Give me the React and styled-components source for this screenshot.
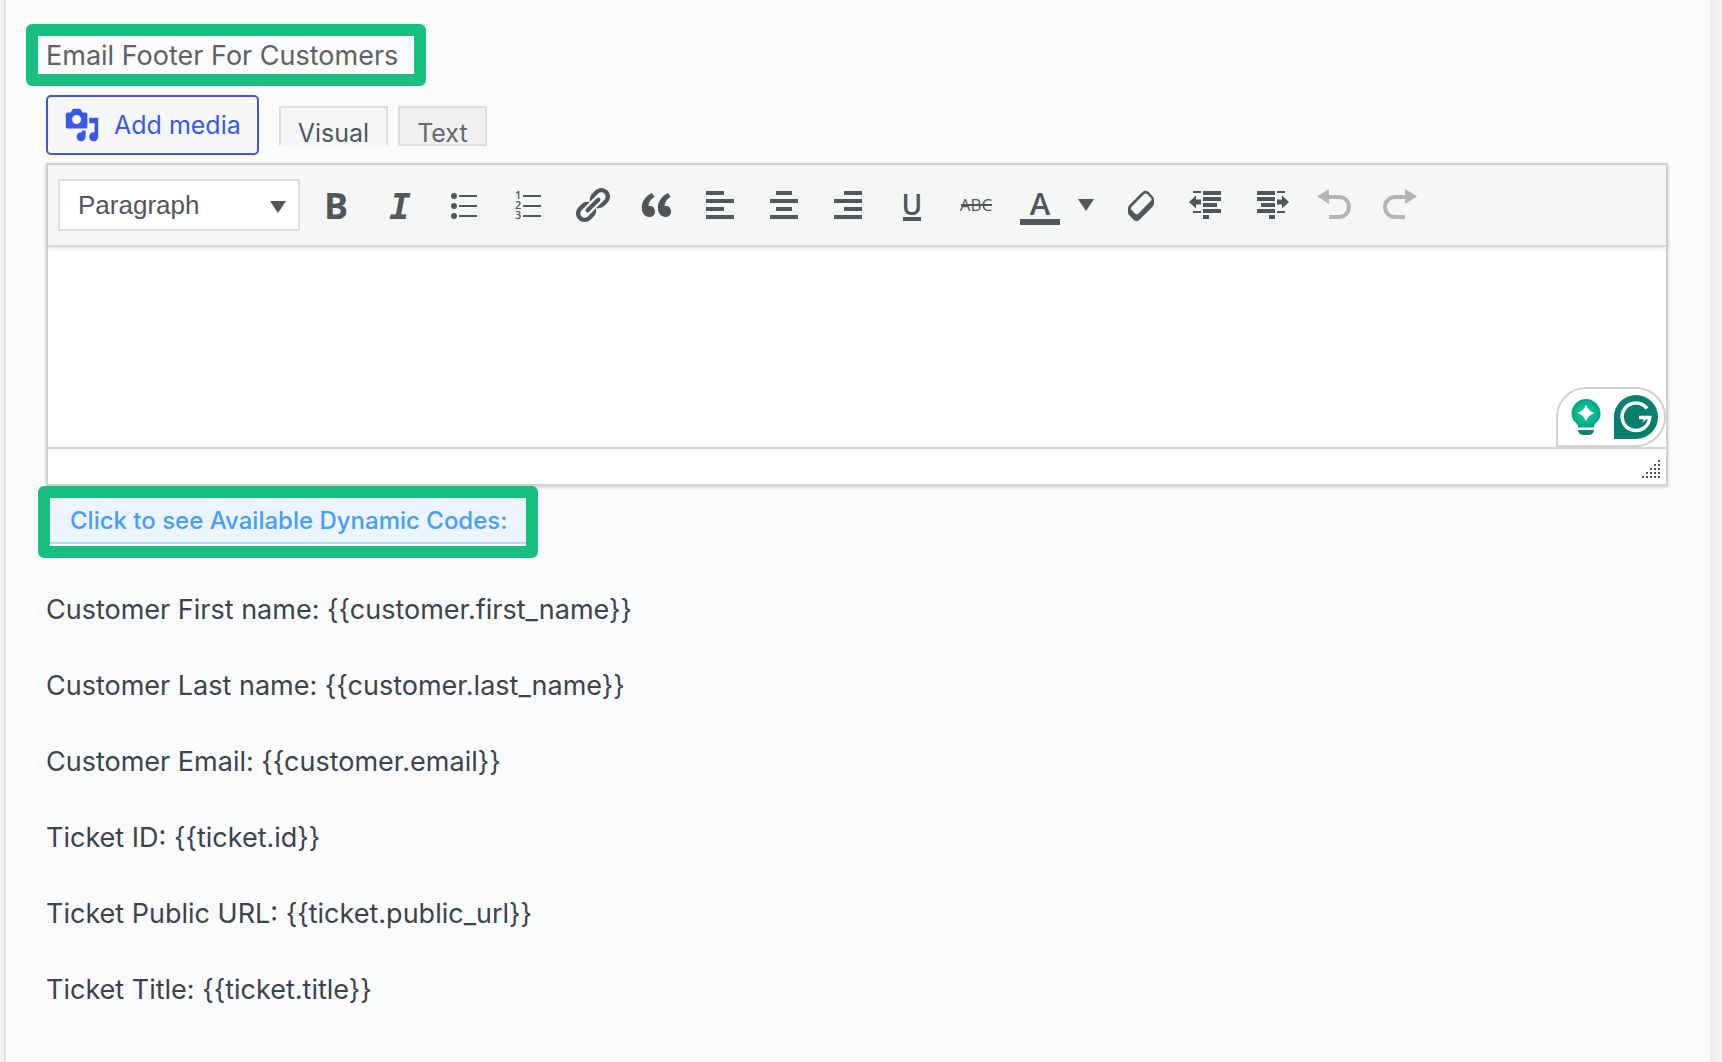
import React, { useState } from "react";
import styled, { createGlobalStyle, css } from "styled-components";

const GlobalStyle = createGlobalStyle`
  * {
    box-sizing: border-box;
  }
  body {
    margin: 0;
    background: #f0f1f3;
    font-family: Inter, "Liberation Sans", sans-serif;
    color: #3c434a;
  }
  button, select, textarea {
    font-family: inherit;
    margin: 0;
  }
`;

const Panel = styled.main`
  min-height: 100vh;
  margin: 0 6px 0 4px;
  padding: 24px 42px 40px 40px;
  background: #fafbfd;
  border-left: 2px solid #dfe0e3;
  border-right: 6px solid #ecedf0;
`;

const Highlight = styled.div`
  width: fit-content;
  border: 12px solid #18bf80;
  border-radius: 6px;
`;

const TitleHighlight = styled(Highlight)`
  margin-left: -20px;
  padding: 2px 16px 0 8px;
`;

const CodesHighlight = styled(Highlight)`
  position: relative;
  margin-left: -8px;
  padding-bottom: 2px;
  background: #ffffff;
`;

const Title = styled.label`
  display: block;
  font-size: 27px;
  line-height: 36px;
  color: #5f6163;
`;

const MediaRow = styled.div`
  display: flex;
  align-items: center;
  gap: 20px;
  margin: 9px 0 8px;
`;

const MediaButton = styled.button`
  display: flex;
  align-items: center;
  gap: 14px;
  height: 60px;
  padding: 0 16px;
  border: 2px solid #3f58d2;
  border-radius: 5px;
  background: #f6f7f8;
  color: #3858e9;
  font-size: 25px;
  cursor: pointer;
`;

const Tabs = styled.div`
  display: flex;
  gap: 10px;
  margin-top: 2px;
`;

const Tab = styled.button`
  height: 40px;
  padding: 12px 17px 0;
  border: 2px solid #dcdcde;
  background: #f0f0f1;
  color: #646970;
  font-size: 25px;
  line-height: 26px;
  cursor: pointer;
  ${({ $active }) =>
    $active &&
    css`
      border-bottom-color: #f6f7f7;
      background: #f6f7f7;
      color: #50575e;
    `}
`;

const EditorBox = styled.section`
  border: 2px solid #cfd1d3;
  background: #ffffff;
  box-shadow: 0 1px 3px rgba(0, 0, 0, 0.2);
`;

const Toolbar = styled.div`
  display: flex;
  flex-wrap: wrap;
  align-items: center;
  min-height: 82px;
  padding: 0 10px;
  background: #f5f7f7;
  border-bottom: 2px solid #d8dadb;
  box-shadow: 0 2px 4px rgba(0, 0, 0, 0.1);
`;

const SelectWrap = styled.div`
  position: relative;
  margin-right: 4px;
`;

const FormatSelect = styled.select`
  appearance: none;
  display: block;
  width: 242px;
  height: 52px;
  padding: 0 40px 0 18px;
  border: 2px solid #dcdedf;
  border-radius: 0;
  background: #ffffff;
  color: #50575e;
  font-family: "Liberation Sans", sans-serif;
  font-size: 26px;
`;

const SelectArrow = styled.svg`
  position: absolute;
  top: 22px;
  right: 14px;
  pointer-events: none;
`;

const ToolButton = styled.button`
  display: flex;
  align-items: center;
  justify-content: center;
  width: ${({ $narrow }) => ($narrow ? "38px" : "64px")};
  height: 56px;
  padding: ${({ $narrow }) => ($narrow ? "0 10px 0 0" : "0")};
  border: none;
  background: transparent;
  color: #50575a;
  cursor: pointer;
  &:disabled {
    color: #b3b6b7;
    cursor: default;
  }
  svg {
    flex: none;
    overflow: visible;
  }
`;

const EditArea = styled.div`
  position: relative;
`;

const Content = styled.textarea`
  display: block;
  width: 100%;
  height: 200px;
  padding: 18px 20px;
  border: none;
  outline: none;
  resize: none;
  background: transparent;
  color: #3c434a;
  font-size: 27px;
`;

const Assistant = styled.div`
  position: absolute;
  right: 0;
  bottom: 0;
  display: flex;
  align-items: center;
  gap: 13px;
  height: 60px;
  padding: 0 6px 0 13px;
  border: 2px solid #cfd2d8;
  border-radius: 30px 30px 30px 0;
  background: #ffffff;
`;

const AssistantButton = styled.button`
  display: flex;
  padding: 0;
  border: none;
  background: none;
  cursor: pointer;
`;

const StatusBar = styled.div`
  display: flex;
  justify-content: flex-end;
  align-items: flex-end;
  height: 37px;
  padding: 0 6px 6px;
  border-top: 2px solid #d3d5d8;
`;

const CodesButton = styled.button`
  display: block;
  height: 46px;
  padding: 0 18px 0 20px;
  border: none;
  border-bottom: 2px solid #b3d8ff;
  background: #ecf5ff;
  color: #479ef5;
  font-size: 24px;
  font-weight: 500;
  cursor: pointer;
`;

const CodeList = styled.div`
  margin-top: 32px;
`;

const CodeLine = styled.p`
  margin: 0 0 36px;
  font-size: 27px;
  line-height: 40px;
`;

const Icon = ({ size = 40, box = 40, children }) => (
  <svg width={size} height={size} viewBox={`0 0 ${box} ${box}`} fill="currentColor" aria-hidden="true">
    {children}
  </svg>
);

const Caret = () => (
  <svg width="16" height="12" viewBox="0 0 16 12" fill="currentColor" aria-hidden="true">
    <path d="M0 0h16L8 12z" />
  </svg>
);

const MediaIcon = () => (
  <Icon size={36} box={20}>
    <path d="M13 11V4c0-.55-.45-1-1-1h-1.67L9 1H5L3.67 3H2c-.55 0-1 .45-1 1v7c0 .55.45 1 1 1h10c.55 0 1-.45 1-1zM7 4.5c1.38 0 2.5 1.12 2.5 2.5S8.38 9.5 7 9.5 4.5 8.38 4.5 7 5.62 4.5 7 4.5zM14 6h5v10.5c0 1.38-1.12 2.5-2.5 2.5S14 17.88 14 16.5s1.12-2.5 2.5-2.5c.17 0 .34.02.5.05V9h-3V6zm-4 8.05V13h2v3.5c0 1.38-1.12 2.5-2.5 2.5S7 17.88 7 16.5 8.12 14 9.5 14c.17 0 .34.02.5.05z" />
  </Icon>
);

const tools = [
  {
    label: "Bold",
    icon: (
      <Icon>
        <text x="20" y="34" textAnchor="middle" fontFamily="Open Sans" fontWeight="700" fontSize="36">B</text>
      </Icon>
    ),
  },
  {
    label: "Italic",
    icon: (
      <Icon>
        <text x="20" y="34" textAnchor="middle" fontFamily="DejaVu Sans Mono" fontWeight="700" fontStyle="italic" fontSize="36">I</text>
      </Icon>
    ),
  },
  {
    label: "Bulleted list",
    icon: (
      <Icon>
        <circle cx="10" cy="11" r="3" />
        <circle cx="10" cy="21" r="3" />
        <circle cx="10" cy="31" r="3" />
        <path d="M15 10h18v2H15zM15 20h18v2H15zM15 30h18v2H15z" />
      </Icon>
    ),
  },
  {
    label: "Numbered list",
    icon: (
      <Icon>
        <text fontFamily="Open Sans" fontWeight="600" fontSize="11">
          <tspan x="7" y="14">1</tspan>
          <tspan x="7" y="24">2</tspan>
          <tspan x="7" y="34">3</tspan>
        </text>
        <path d="M15 10h18v2H15zM15 20h18v2H15zM15 30h18v2H15z" />
      </Icon>
    ),
  },
  {
    label: "Insert link",
    icon: (
      <Icon box={20}>
        <path d="M17.74 2.76c1.68 1.69 1.68 4.41 0 6.1l-1.53 1.52c-1.12 1.12-2.7 1.47-4.14 1.09l2.62-2.61.76-.77.76-.76c.84-.84.84-2.2 0-3.04-.84-.85-2.2-.85-3.04 0l-.77.76-3.38 3.38c-.37-1.44-.02-3.02 1.1-4.14l1.52-1.53c1.69-1.68 4.42-1.68 6.1 0zM8.59 13.43l5.34-5.34c.42-.42.42-1.1 0-1.52-.44-.43-1.13-.39-1.53 0l-5.33 5.34c-.42.42-.42 1.1 0 1.52.44.43 1.13.39 1.52 0zm-.76 2.29l4.14-4.15c.38 1.44.03 3.02-1.09 4.14l-1.52 1.53c-1.69 1.68-4.41 1.68-6.1 0-1.68-1.68-1.68-4.42 0-6.1l1.53-1.52c1.12-1.12 2.7-1.47 4.14-1.1l-4.14 4.15c-.85.84-.85 2.2 0 3.05.84.84 2.2.84 3.04 0z" />
      </Icon>
    ),
  },
  {
    label: "Blockquote",
    icon: (
      <Icon box={20}>
        <path d="M9.49 13.22c0-.74-.2-1.38-.61-1.9-.62-.78-1.83-.88-2.53-.72-.29-1.65 1.11-3.75 2.92-4.65L7.88 4c-2.73 1.3-5.42 4.28-4.96 8.05C3.21 14.43 4.59 16 6.54 16c.85 0 1.56-.25 2.12-.75s.83-1.18.83-2.03zm8.05 0c0-.74-.2-1.38-.61-1.9-.63-.78-1.83-.88-2.53-.72-.29-1.65 1.11-3.75 2.92-4.65L15.93 4c-2.73 1.3-5.41 4.28-4.95 8.05.29 2.38 1.66 3.95 3.61 3.95.85 0 1.56-.25 2.12-.75s.83-1.18.83-2.03z" />
      </Icon>
    ),
  },
  {
    label: "Align left",
    icon: (
      <Icon>
        <path d="M6 6h18v4H6zM6 14h28v4H6zM6 22h18v4H6zM6 30h28v4H6z" />
      </Icon>
    ),
  },
  {
    label: "Align center",
    icon: (
      <Icon>
        <path d="M12 6h16v4H12zM6 14h28v4H6zM12 22h16v4H12zM6 30h28v4H6z" />
      </Icon>
    ),
  },
  {
    label: "Align right",
    icon: (
      <Icon>
        <path d="M16 6h18v4H16zM6 14h28v4H6zM16 22h18v4H16zM6 30h28v4H6z" />
      </Icon>
    ),
  },
  {
    label: "Underline",
    icon: (
      <Icon>
        <text x="20" y="30" textAnchor="middle" fontFamily="Open Sans" fontWeight="600" fontSize="28">U</text>
        <path d="M11 32h18v4H11z" />
      </Icon>
    ),
  },
  {
    label: "Strikethrough",
    icon: (
      <Icon>
        <text x="20" y="26" textAnchor="middle" fontFamily="Open Sans" fontWeight="500" fontSize="17">ABC</text>
        <path d="M5 19h31v2H5z" />
      </Icon>
    ),
  },
  {
    label: "Text color",
    icon: (
      <Icon>
        <text x="20" y="30" textAnchor="middle" fontFamily="Open Sans" fontWeight="600" fontSize="31">A</text>
        <path d="M0 34h40v6H0z" />
      </Icon>
    ),
  },
  { label: "Choose text color", narrow: true, icon: <Caret /> },
  {
    label: "Clear formatting",
    icon: (
      <Icon box={20}>
        <path d="M14.29 4.59l1.1 1.11c.41.4.61.94.61 1.47v2.12c0 .53-.2 1.07-.61 1.47l-6.63 6.63c-.4.41-.94.61-1.47.61s-1.07-.2-1.47-.61l-1.11-1.1-1.1-1.11c-.41-.4-.61-.94-.61-1.47v-2.12c0-.54.2-1.07.61-1.48l6.63-6.62c.4-.41.94-.61 1.47-.61s1.06.2 1.47.61zm-6.21 9.73l6.41-6.42c.4-.4.39-1.03-.01-1.43l-.96-.96-.98-.96c-.39-.39-1.04-.4-1.43 0l-6.42 6.41c-.39.4-.39 1.04 0 1.43l.98.97.98.96c.39.4 1.03.39 1.43 0z" />
      </Icon>
    ),
  },
  {
    label: "Decrease indent",
    icon: (
      <Icon>
        <path d="M17 6h18v4H17zM17 12h18v4H17zM17 18h14v4H17zM17 24h18v4H17zM17 30h6v4h-6zM7 6h8v2H7zM7 26h8v2H7z" />
        <path d="M3 17l7-6.500v4h5v5h-5v4z" />
      </Icon>
    ),
  },
  {
    label: "Increase indent",
    icon: (
      <Icon>
        <path d="M7 6h18v4H7zM7 12h18v4H7zM11 18h14v4H11zM7 24h18v4H7zM19 30h6v4h-6zM27 6h8v2h-8zM27 26h8v2h-8z" />
        <path d="M39 17l-7-6.500v4h-5v5h5v4z" />
      </Icon>
    ),
  },
  {
    label: "Undo",
    disabled: true,
    icon: (
      <Icon>
        <path d="M3 11.500L15 4v15z" />
        <path d="M14 12h11a10 10 0 0 1 0 20H15" fill="none" stroke="currentColor" strokeWidth="4" />
      </Icon>
    ),
  },
  {
    label: "Redo",
    disabled: true,
    icon: (
      <Icon>
        <path d="M39 11.500L27 4v15z" />
        <path d="M28 12H17a10 10 0 0 0 0 20h10" fill="none" stroke="currentColor" strokeWidth="4" />
      </Icon>
    ),
  },
];

const BulbIcon = () => (
  <svg width="30" height="36" viewBox="0 0 30 36" aria-hidden="true">
    <defs>
      <radialGradient id="bulb" cx="0.5" cy="0.5" r="0.5">
        <stop offset="0.3" stopColor="#12c79b" />
        <stop offset="1" stopColor="#04a583" />
      </radialGradient>
    </defs>
    <path d="M15 0a14.500 14.500 0 0 1 14.500 14.500c0 4-1.500 6.500-3.500 8.500-2 1.800-3 3-3 5.500H7c0-2.500-1-3.700-3-5.500-2-2-3.500-4.500-3.500-8.500A14.500 14.500 0 0 1 15 0z" fill="url(#bulb)" />
    <path d="M15 5.500c1.800 4.700 4 6.900 8.500 8.500-4.500 1.600-6.700 3.800-8.500 8.500-1.800-4.700-4-6.900-8.500-8.500 4.500-1.600 6.700-3.800 8.500-8.500z" fill="#ffffff" />
    <path d="M7 31h16a5 5 0 0 1-5 5h-6a5 5 0 0 1-5-5z" fill="#0a8270" />
  </svg>
);

const GrammarIcon = () => (
  <svg width="44" height="44" viewBox="0 0 44 44" aria-hidden="true">
    <path d="M22 0a22 22 0 0 1 0 44H0V22A22 22 0 0 1 22 0z" fill="#087f6d" />
    <path d="M33 13.500A13.800 13.800 0 1 0 35.700 22.500H25" fill="none" stroke="#ffffff" strokeWidth="3.500" />
    <path d="M28 28l7-6h-4z" fill="#ffffff" />
  </svg>
);

const ResizeGrip = () => (
  <svg width="18" height="18" viewBox="0 0 18 18" fill="#50575a" aria-hidden="true">
    {[0, 1, 2, 3, 4].map((row) =>
      [0, 1, 2, 3, 4]
        .filter((col) => col >= 4 - row)
        .map((col) => <rect key={`${row}-${col}`} x={col * 4} y={row * 4} width="2" height="2" />)
    )}
  </svg>
);

const codes = [
  ["Customer First name", "customer.first_name"],
  ["Customer Last name", "customer.last_name"],
  ["Customer Email", "customer.email"],
  ["Ticket ID", "ticket.id"],
  ["Ticket Public URL", "ticket.public_url"],
  ["Ticket Title", "ticket.title"],
];

const App = () => {
  const [mode, setMode] = useState("Visual");
  const [showCodes, setShowCodes] = useState(true);

  return (
    <>
      <GlobalStyle />
      <Panel>
        <TitleHighlight>
          <Title htmlFor="email-footer">Email Footer For Customers</Title>
        </TitleHighlight>

        <MediaRow>
          <MediaButton type="button">
            <MediaIcon />
            Add media
          </MediaButton>
          <Tabs>
            {["Visual", "Text"].map((name) => (
              <Tab key={name} type="button" $active={mode === name} onClick={() => setMode(name)}>
                {name}
              </Tab>
            ))}
          </Tabs>
        </MediaRow>

        <EditorBox>
          <Toolbar>
            <SelectWrap>
              <FormatSelect aria-label="Text format" defaultValue="Paragraph">
                <option>Paragraph</option>
                <option>Heading 1</option>
                <option>Heading 2</option>
              </FormatSelect>
              <SelectArrow width="16" height="12" viewBox="0 0 16 12" fill="#50575a" aria-hidden="true">
                <path d="M0 0h16L8 12z" />
              </SelectArrow>
            </SelectWrap>
            {tools.map(({ label, icon, narrow, disabled }) => (
              <ToolButton key={label} type="button" aria-label={label} $narrow={narrow} disabled={disabled}>
                {icon}
              </ToolButton>
            ))}
          </Toolbar>
          <EditArea>
            <Content id="email-footer" />
            <Assistant>
              <AssistantButton type="button" aria-label="Suggestions">
                <BulbIcon />
              </AssistantButton>
              <AssistantButton type="button" aria-label="Check grammar">
                <GrammarIcon />
              </AssistantButton>
            </Assistant>
          </EditArea>
          <StatusBar>
            <ResizeGrip />
          </StatusBar>
        </EditorBox>

        <CodesHighlight>
          <CodesButton type="button" aria-expanded={showCodes} onClick={() => setShowCodes(!showCodes)}>
            Click to see Available Dynamic Codes:
          </CodesButton>
        </CodesHighlight>

        {showCodes && (
          <CodeList>
            {codes.map(([name, code]) => (
              <CodeLine key={code}>{`${name}: {{${code}}}`}</CodeLine>
            ))}
          </CodeList>
        )}
      </Panel>
    </>
  );
};

export default App;
